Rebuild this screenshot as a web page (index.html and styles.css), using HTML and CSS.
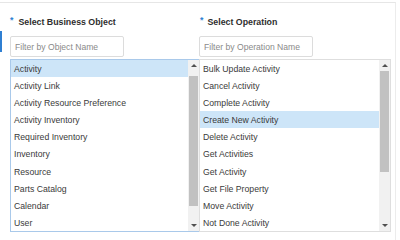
FILE: index.html
```html
<!DOCTYPE html>
<html lang="en">
<head>
    <meta charset="UTF-8">
    <meta name="viewport" content="width=device-width, initial-scale=1.0">
    <title>Select Business Object</title>
    <link rel="stylesheet" href="styles.css">
</head>
<body>
    <div class="page">
        <div class="edge-bar"></div>
        <div class="columns">
            <div class="column column-left">
                <div class="field-label"><span class="req">*</span>Select Business Object</div>
                <input class="filter" type="text" placeholder="Filter by Object Name">
                <div class="list list-focused">
                    <ul class="items">
                        <li class="selected">Activity</li>
                        <li>Activity Link</li>
                        <li>Activity Resource Preference</li>
                        <li>Activity Inventory</li>
                        <li>Required Inventory</li>
                        <li>Inventory</li>
                        <li>Resource</li>
                        <li>Parts Catalog</li>
                        <li>Calendar</li>
                        <li>User</li>
                    </ul>
                    <div class="scrollbar">
                        <div class="arrow arrow-up"></div>
                        <div class="track">
                            <div class="thumb" style="margin-top: 5px; height: 130px;"></div>
                        </div>
                        <div class="arrow arrow-down"></div>
                    </div>
                </div>
            </div>
            <div class="column column-right">
                <div class="field-label"><span class="req">*</span>Select Operation</div>
                <input class="filter" type="text" placeholder="Filter by Operation Name">
                <div class="list">
                    <ul class="items">
                        <li>Bulk Update Activity</li>
                        <li>Cancel Activity</li>
                        <li>Complete Activity</li>
                        <li class="selected">Create New Activity</li>
                        <li>Delete Activity</li>
                        <li>Get Activities</li>
                        <li>Get Activity</li>
                        <li>Get File Property</li>
                        <li>Move Activity</li>
                        <li>Not Done Activity</li>
                    </ul>
                    <div class="scrollbar">
                        <div class="arrow arrow-up"></div>
                        <div class="track">
                            <div class="thumb" style="margin-top: 0; height: 101px;"></div>
                        </div>
                        <div class="arrow arrow-down"></div>
                    </div>
                </div>
            </div>
        </div>
    </div>
</body>
</html>
```

FILE: styles.css
```css
body {
    font-family: "Liberation Sans", Arial, sans-serif;
    margin: 0;
    padding: 0;
    background-color: #fff;
    color: #333;
}
.page {
    display: flex;
    margin-top: 2px;
    width: 395px;
    height: 237px;
    border-top: 1px solid #e6e6e6;
    border-right: 1px solid #ececec;
}
.edge-bar {
    width: 2px;
    height: 21px;
    margin-top: 28px;
    background-color: #2f7fd2;
}
.columns {
    display: flex;
    padding-left: 8px;
    padding-top: 12px;
}
.column-left {
    width: 189px;
}
.column-right {
    width: 192px;
}
.field-label {
    height: 15px;
    line-height: 15px;
    font-size: 8.8px;
    font-weight: bold;
    color: #2e2e2e;
}
.req {
    color: #2f7fd2;
    margin-right: 5px;
    position: relative;
    top: -2px;
}
.column-right .req {
    margin-left: 1px;
    margin-right: 4px;
}
.filter {
    display: block;
    box-sizing: border-box;
    width: 114px;
    height: 21px;
    margin: 6px 0 0 0;
    padding: 0 4px;
    border: 1px solid #dcdcdc;
    border-radius: 2px;
    font-family: inherit;
    font-size: 8.6px;
    color: #333;
    outline: none;
}
.filter::placeholder {
    color: #8a8a8a;
}
.list {
    display: flex;
    margin-top: 2px;
    height: 171px;
    border: 1px solid #dedede;
}
.list-focused {
    border-color: #a9c9ea;
    border-right: none;
}
.items {
    flex: 1;
    list-style: none;
    margin: 0;
    padding: 0;
    overflow: hidden;
}
.items li {
    height: 17.1px;
    line-height: 18px;
    padding-left: 3px;
    font-size: 8.7px;
    color: #3a3a3a;
    white-space: nowrap;
    overflow: hidden;
}
.items li.selected {
    background-color: #cde5f8;
}
.scrollbar {
    display: flex;
    flex-direction: column;
    width: 11px;
    background-color: #f1f1f1;
}
.track {
    flex: 1;
    display: flex;
    flex-direction: column;
    align-items: center;
}
.thumb {
    width: 9px;
    background-color: #c1c1c1;
}
.arrow {
    height: 11px;
    display: flex;
    align-items: center;
    justify-content: center;
}
.arrow::after {
    content: "";
    width: 0;
    height: 0;
    border-left: 3px solid transparent;
    border-right: 3px solid transparent;
}
.arrow-up::after {
    border-bottom: 3px solid #505050;
}
.arrow-down::after {
    border-top: 3px solid #505050;
}
```
